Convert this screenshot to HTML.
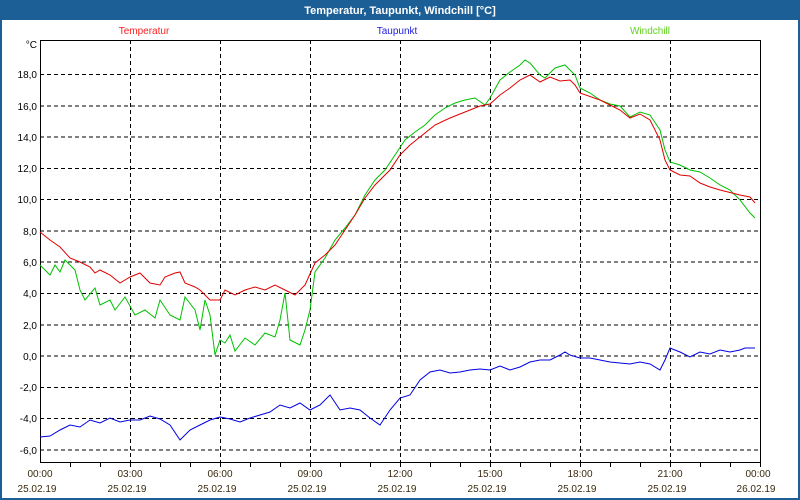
<!DOCTYPE html>
<html><head><style>
html,body{margin:0;padding:0;background:#fff;}
body{width:800px;height:500px;overflow:hidden;font-family:"Liberation Sans",sans-serif;}
</style></head><body>
<svg width="800" height="500" xmlns="http://www.w3.org/2000/svg" style="display:block;font-family:'Liberation Sans',sans-serif">
<rect x="0" y="0" width="800" height="500" fill="#1c5f97"/>
<rect x="2" y="20" width="796" height="478" fill="#fff"/>
<text x="400" y="14" fill="#fff" font-size="11" font-weight="bold" text-anchor="middle">Temperatur, Taupunkt, Windchill [°C]</text>
<text x="144" y="34" fill="#ff2020" font-size="10" text-anchor="middle">Temperatur</text>
<text x="397" y="34" fill="#2020e0" font-size="10" text-anchor="middle">Taupunkt</text>
<text x="650" y="34" fill="#60d020" font-size="10" text-anchor="middle">Windchill</text>
<g stroke="#000" stroke-width="1" stroke-dasharray="4,3" fill="none">
<path d="M40 74.5H760M40 106H760M40 137H760M40 168.5H760M40 199.5H760M40 231H760M40 262H760M40 293.5H760M40 325H760M40 356H760M40 387.5H760M40 418.5H760M40 450H760"/>
<path d="M130.5 40V462M220.5 40V462M310.5 40V462M400.5 40V462M490.5 40V462M580.5 40V462M670.5 40V462"/>
</g>
<path d="M40.5 40V462.5H760.5V40M40 40.5H760" stroke="#000" fill="none"/>
<path d="M70.5 462V467M100.5 462V467M130.5 462V467M160.5 462V467M190.5 462V467M220.5 462V467M250.5 462V467M280.5 462V467M310.5 462V467M340.5 462V467M370.5 462V467M400.5 462V467M430.5 462V467M460.5 462V467M490.5 462V467M520.5 462V467M550.5 462V467M580.5 462V467M610.5 462V467M640.5 462V467M670.5 462V467M700.5 462V467M730.5 462V467M760.5 462V467" stroke="#000"/>
<g font-size="10" fill="#000" text-anchor="end">
<text x="37" y="48">°C</text>
<text x="37" y="78">18,0</text><text x="37" y="110">16,0</text><text x="37" y="141">14,0</text><text x="37" y="172">12,0</text><text x="37" y="203">10,0</text><text x="37" y="235">8,0</text><text x="37" y="266">6,0</text><text x="37" y="297">4,0</text><text x="37" y="329">2,0</text><text x="37" y="360">0,0</text><text x="37" y="391">-2,0</text><text x="37" y="422">-4,0</text><text x="37" y="454">-6,0</text>
</g>
<g font-size="10" fill="#3a2a10" text-anchor="middle">
<text x="40" y="477">00:00</text><text x="130" y="477">03:00</text><text x="220" y="477">06:00</text><text x="310" y="477">09:00</text><text x="400" y="477">12:00</text><text x="490" y="477">15:00</text><text x="580" y="477">18:00</text><text x="670" y="477">21:00</text><text x="758" y="477">00:00</text>
<text x="37" y="492">25.02.19</text><text x="127" y="492">25.02.19</text><text x="217" y="492">25.02.19</text><text x="307" y="492">25.02.19</text><text x="397" y="492">25.02.19</text><text x="487" y="492">25.02.19</text><text x="577" y="492">25.02.19</text><text x="667" y="492">25.02.19</text><text x="756" y="492">26.02.19</text>
</g>
<g fill="none" stroke-width="1">
<polyline stroke="#00c000" points="40,265 50,275 55,265 60,272 65,260 75,270 80,290 85,300 95,288 100,305 110,300 115,310 125,297 135,315 145,310 155,318 160,300 170,315 180,320 185,297 195,310 200,330 205,300 210,315 215,355 220,340 225,343 230,335 235,351 245,338 255,345 265,333 275,337 280,320 285,293 290,340 300,345 305,330 310,310 315,272 325,258 335,240 345,228 355,215 365,195 375,180 385,170 395,155 405,140 415,132 425,125 435,115 445,108 455,103 465,100 475,98 485,105 490,98 500,80 510,72 520,65 525,60 530,63 540,75 545,78 555,68 565,65 575,75 580,88 590,93 600,100 610,104 620,106 630,117 640,112 650,115 660,130 665,150 670,162 680,165 690,170 700,172 710,178 720,185 730,190 740,200 750,213 755,218"/>
<polyline stroke="#e00000" points="40,232 50,240 60,247 70,258 80,262 90,267 95,273 100,270 110,275 120,283 130,277 140,273 150,283 160,285 165,277 175,273 180,272 185,283 195,287 200,290 210,300 220,300 225,290 235,295 245,290 255,287 265,290 275,285 285,290 295,295 305,285 315,263 325,255 335,245 345,230 355,215 365,198 375,185 390,170 400,155 410,145 420,137 435,125 450,118 465,112 480,106 490,104 500,95 510,88 520,80 530,75 540,82 550,77 560,81 570,80 575,85 580,93 600,100 610,105 620,110 630,118 640,114 650,120 660,140 665,160 670,170 680,175 690,176 700,183 710,187 720,190 740,195 750,197 755,203"/>
<polyline stroke="#0000e0" points="40,437 50,436 60,430 70,425 80,427 90,420 100,423 110,418 120,422 130,420 140,420 150,416 160,419 170,425 180,440 190,430 200,425 210,420 220,417 230,419 240,422 250,418 260,415 270,412 280,405 290,408 300,403 310,410 320,405 330,395 340,410 350,408 360,410 370,418 380,425 390,410 400,398 410,395 420,380 430,372 440,370 450,373 460,372 470,370 480,369 490,370 500,366 510,370 520,367 530,362 540,360 550,360 560,355 565,352 570,355 580,358 590,358 600,360 610,362 620,363 630,364 640,362 650,364 660,370 665,360 670,348 680,352 690,357 700,352 710,354 720,350 730,352 740,350 745,348 755,348"/>
</g>
</svg>
</body></html>
